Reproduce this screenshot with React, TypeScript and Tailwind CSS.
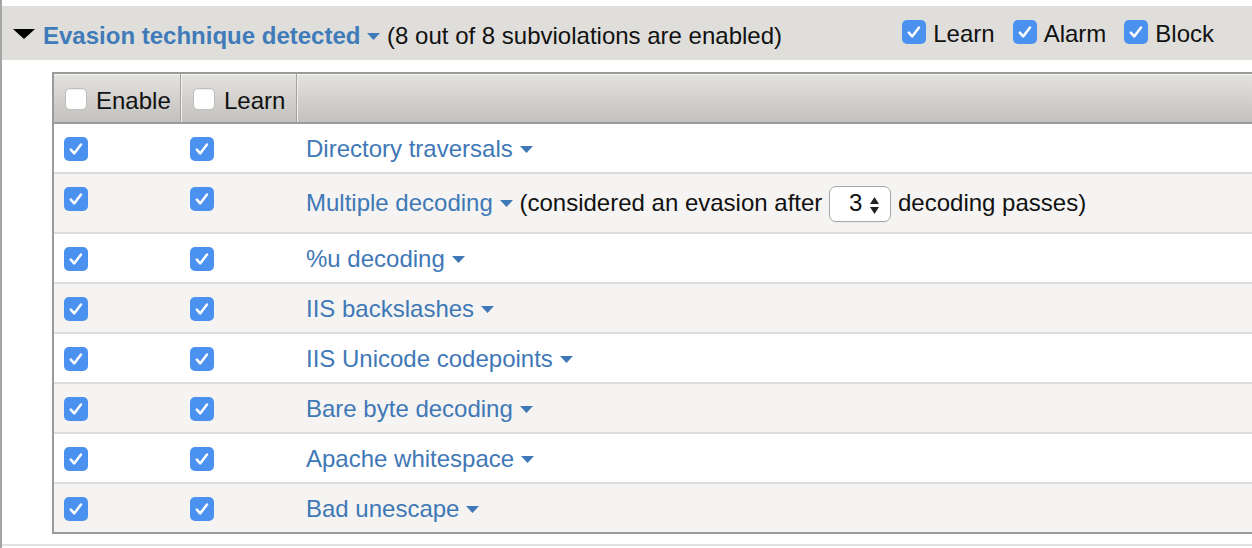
import clsx from "clsx";

const cn = clsx;

const ROWS = [
  "Directory traversals",
  "Multiple decoding",
  "%u decoding",
  "IIS backslashes",
  "IIS Unicode codepoints",
  "Bare byte decoding",
  "Apache whitespace",
  "Bad unescape",
];

function Caret({ className }: { className?: string }) {
  return (
    <svg width="13" height="7" viewBox="0 0 13 7" className={cn("inline-block", className)}>
      <path d="M0 0H13L6.5 7Z" fill="currentColor" />
    </svg>
  );
}

function Checkbox({ on = true, small = false }: { on?: boolean; small?: boolean }) {
  if (!on) {
    return (
      <span
        className={cn(
          "inline-block shrink-0 rounded-[5px] border border-[#bdbdbd] bg-white shadow-[inset_0_1px_1px_rgba(0,0,0,0.06)]",
          small ? "size-[22px]" : "size-[24px]"
        )}
      />
    );
  }
  return (
    <span className="inline-flex size-[24px] shrink-0 items-center justify-center rounded-[5px] bg-[#4b91ef]">
      <svg width="24" height="24" viewBox="0 0 24 24">
        <path d="M6.8 12.6L10.2 16.4L17 7.6" fill="none" stroke="white" strokeWidth="2.5" strokeLinecap="round" strokeLinejoin="round" />
      </svg>
    </span>
  );
}

function PassesSelect() {
  return (
    <span className="inline-block h-[36px] rounded-[7px] border border-[#a9a9a9] bg-white pl-[19px] pr-[11px] pt-[2px] align-baseline leading-[28px] text-[#111] shadow-[0_1px_1px_rgba(0,0,0,0.05)]">
      3
      <svg width="9" height="18" viewBox="0 0 9 18" className="ml-[8px] inline-block align-[-4px]">
        <path d="M0 7H9L4.5 0Z M0 10H9L4.5 17Z" fill="#222" />
      </svg>
    </span>
  );
}

export default function App() {
  return (
    <div className="h-[548px] w-[1252px] overflow-hidden border-l-2 border-[#a5a5a5] bg-white pt-[6px] font-['Liberation_Sans',Arial,sans-serif] text-[24px] text-[#111]">
      <div className="border-b-2 border-[#e2e1df] pb-[10px]">
        {/* section header */}
        <div className="flex h-[54px] items-start justify-between bg-[#dfdedb] pl-[11px] pr-[38px]">
          <div className="flex items-start pt-[16px] leading-[28px]">
            <svg width="22" height="10" viewBox="0 0 22 10" className="mt-[7px] shrink-0">
              <path d="M0 0H22L11 10Z" fill="#000" />
            </svg>
            <p className="ml-[8px] whitespace-nowrap">
              <span className="font-bold text-[#3f7ab9]">
                Evasion technique detected
                <Caret className="mb-[3px] ml-[7px]" />
              </span>{" "}
              (8 out of 8 subviolations are enabled)
            </p>
          </div>
          <div className="flex items-start gap-[18px] pt-[14px] leading-[28px]">
            {["Learn", "Alarm", "Block"].map((label) => (
              <div key={label} className="flex items-start gap-[7px]">
                <Checkbox />
                <span>{label}</span>
              </div>
            ))}
          </div>
        </div>

        {/* subviolations table */}
        <div className="ml-[50px] mt-[12px] border-l-2 border-[#9b9b9b]">
          <div className="flex h-[52px] border-y-2 border-[#9b9b9b] bg-gradient-to-b from-[#e4e3e0] to-[#c3c1bd] leading-[28px] shadow-[inset_0_1px_0_#f6f6f4]">
            <div className="flex w-[127px] shrink-0 items-start gap-[9px] border-r border-[#a3a3a3] pl-[11px] pt-[14px]">
              <Checkbox on={false} small />
              <span className="-mt-[1px]">Enable</span>
            </div>
            <div className="flex w-[116px] shrink-0 items-start gap-[9px] border-x border-l-[#f1f0ee] border-r-[#a3a3a3] pl-[11px] pt-[14px]">
              <Checkbox on={false} small />
              <span className="-mt-[1px]">Learn</span>
            </div>
            <div className="flex-1 border-l border-[#f1f0ee]" />
          </div>

          {ROWS.map((name, i) => (
            <div
              key={name}
              className={cn(
                "flex border-b-2",
                i === ROWS.length - 1 ? "border-[#9b9b9b]" : "border-[#dddcda]",
                i % 2 === 1 ? "bg-[#f5f4f2]" : "bg-white",
                i === 1 ? "h-[60px]" : "h-[50px]"
              )}
            >
              <div className="w-[128px] shrink-0 pl-[10px] pt-[11px]">
                <Checkbox />
              </div>
              <div className="w-[116px] shrink-0 pl-[8px] pt-[11px]">
                <Checkbox />
              </div>
              <p className={cn("flex-1 whitespace-nowrap pl-[8px] leading-[28px]", i === 1 ? "pt-[12px]" : "pt-[11px]")}>
                <span className="text-[#3f78b6]">
                  {name}
                  <Caret className="mb-[3px] ml-[7px]" />
                </span>
                {i === 1 && (
                  <>
                    <span> (considered an evasion after </span>
                    <PassesSelect />
                    <span> decoding passes)</span>
                  </>
                )}
              </p>
            </div>
          ))}
        </div>
      </div>
    </div>
  );
}
